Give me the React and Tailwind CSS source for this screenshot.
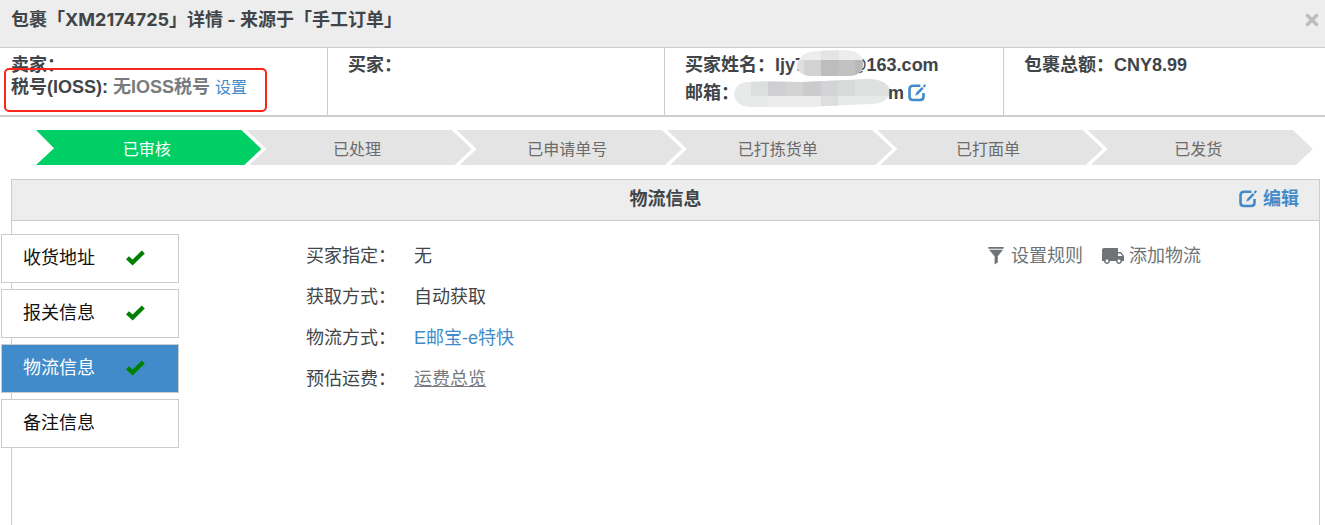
import React, { useState } from "react";
import { MdLocalShipping } from "react-icons/md";

const steps = ["已审核", "已处理", "已申请单号", "已打拣货单", "已打面单", "已发货"];

const tabs = [
  { id: "address", label: "收货地址", done: true },
  { id: "customs", label: "报关信息", done: true },
  { id: "logistics", label: "物流信息", done: true },
  { id: "remark", label: "备注信息", done: false },
];

const EditIcon = () => (
  <svg viewBox="0 0 18 18" className="h-[18px] w-[18px] shrink-0" fill="currentColor" aria-hidden="true">
    <path
      d="M12.4 1.8H5.2Q1.5 1.8 1.5 5.4V12.4Q1.5 16 5.2 16H11.8Q15.5 16 15.5 12.4V9"
      fill="none"
      stroke="currentColor"
      strokeWidth="2.6"
    />
    <path d="M7.2 11.8L8.2 8.8L13.8 3L15.6 4.8L10 10.6Z" />
    <path d="M14.7 2.2L16.2 0.6Q16.8 0.1 17.5 0.7Q18.1 1.4 17.6 2L16.2 3.7Z" />
  </svg>
);

const CheckIcon = () => (
  <svg viewBox="0 0 19 16" className="h-4 w-[19px]" fill="#008000" aria-hidden="true">
    <path d="M0 9.2L3 6.2L6.6 9.6L15.8 0.4L18.8 3.4L6.6 15.6Z" />
  </svg>
);

const FilterIcon = () => (
  <svg viewBox="0 0 16 18" className="h-[18px] w-4" fill="currentColor" aria-hidden="true">
    <path d="M0.4 0H15.6V1.7H0.4ZM1 2.8H15L9.8 9.2V15.6L6.6 17.4V9.2Z" />
  </svg>
);

// mosaic over the private part of the account name
const NameMask = () => (
  <svg viewBox="0 0 66 27" className="absolute -top-px left-[22px] h-[27px] w-[66px]" aria-hidden="true">
    <clipPath id="name-mask">
      <path d="M1 12Q4 2 20 1L48 0Q64 1 66 11V16Q64 25 54 26H12Q1 24 0 16Z" />
    </clipPath>
    <g clipPath="url(#name-mask)">
      <rect width="66" height="27" fill="#ededed" />
      <rect x="24" width="18" height="10" fill="#e4e4e5" />
      <rect y="10" width="7" height="17" fill="#dedede" />
      <rect x="7" y="10" width="17" height="17" fill="#d2d2d3" />
      <rect x="24" y="10" width="17" height="17" fill="#bdbdbe" />
      <rect x="41" y="10" width="17" height="17" fill="#c2c2c3" />
      <rect x="58" y="10" width="8" height="17" fill="#b9b9ba" />
    </g>
  </svg>
);

const EmailMask = () => (
  <svg viewBox="0 0 156 28" className="-ml-[5px] h-7 w-[156px]" aria-hidden="true">
    <clipPath id="email-mask">
      <path d="M12 3Q40 2 68 3L136 0Q154 1 156 12Q155 24 138 25L70 28H14Q1 26 0 15Q1 5 12 3Z" />
    </clipPath>
    <g clipPath="url(#email-mask)">
      <rect width="156" height="28" fill="#e8e9e9" />
      <rect x="17" width="17" height="17" fill="#dddfdf" />
      <rect x="34" width="18" height="17" fill="#cfcfd1" />
      <rect x="52" width="17" height="17" fill="#d3d3d4" />
      <rect x="69" width="18" height="17" fill="#cbcbcd" />
      <rect x="87" width="17" height="17" fill="#d3d4d5" />
      <rect x="104" width="17" height="17" fill="#d9dada" />
      <rect x="121" width="35" height="17" fill="#dfe1e0" />
      <rect x="34" y="17" width="53" height="11" fill="#ececec" />
      <rect x="87" y="17" width="17" height="11" fill="#dddfde" />
    </g>
  </svg>
);

const Row = ({ label, children }) => (
  <div className="flex h-[41px] items-center gap-[18px]">
    <dt className="w-[90px] shrink-0">{label}：</dt>
    <dd>{children}</dd>
  </div>
);

const App = () => {
  const [active, setActive] = useState("logistics");

  return (
    <div className="flex min-h-screen flex-col bg-white font-['Liberation_Sans','Noto_Sans_CJK_SC',sans-serif] text-lg text-[#404549]">
      <header className="flex h-12 items-center justify-between border-b border-[#ccc] bg-[#ededed] pr-[6px] pb-2 pl-[11px]">
        <h1 className="font-['Inter','Noto_Sans_CJK_SC',sans-serif] font-bold">
          包裹「XM2174725」详情 - 来源于「手工订单」
        </h1>
        <button type="button" aria-label="关闭" className="text-[#bdbdbd]">
          <svg viewBox="0 0 14 14" className="h-[14px] w-[14px]" stroke="currentColor" strokeWidth="3.4">
            <path d="M1.5 1.5L12.5 12.5M12.5 1.5L1.5 12.5" />
          </svg>
        </button>
      </header>

      <section className="grid h-[69px] grid-cols-[328fr_337fr_339fr_321fr] border-b-2 border-[#ccc] font-bold">
        <div className="relative border-r border-[#ccc] pt-[6px] pl-[11px] leading-[22px]">
          <p>卖家：</p>
          <p>
            税号(IOSS): <span className="text-[#777b7e]">无IOSS税号</span>{" "}
            <a href="#ioss" className="text-base leading-[22px] font-normal text-[#428bca]">设置</a>
          </p>
          <div className="pointer-events-none absolute top-5 left-1 h-11 w-[263px] rounded-[5px] border-2 border-[#f9251a]" />
        </div>
        <div className="border-r border-[#ccc] pt-[3px] pl-5 leading-7">买家：</div>
        <div className="border-r border-[#ccc] pt-[3px] pl-5 leading-7">
          <p className="flex">
            买家姓名：
            <span className="relative">
              ljy7
              <span className="inline-block w-11" />
              @163.com
              <NameMask />
            </span>
          </p>
          <p className="flex items-center">
            邮箱：
            <EmailMask />
            <span className="-ml-[2px]">m</span>
            <a href="#email" aria-label="编辑邮箱" className="ml-1 text-[#428bca]">
              <EditIcon />
            </a>
          </p>
        </div>
        <div className="pt-[3px] pl-5 leading-7">包裹总额：CNY8.99</div>
      </section>

      <ol className="mt-[13px] mr-3 ml-9 flex text-base text-[#6b6b6b]">
        {steps.map((step, i) => (
          <li
            key={step}
            className={
              i === 0
                ? "h-[35px] flex-1 bg-[#00cf65] pt-1 pr-1 text-center leading-8 text-white [clip-path:polygon(0_0,calc(100%-20px)_0,100%_54%,calc(100%-17px)_100%,0_100%,18px_52%)]"
                : "-ml-[15px] h-[35px] flex-1 bg-[#e4e4e4] pt-1 pr-1 text-center leading-8 [clip-path:polygon(0_0,calc(100%-20px)_0,100%_54%,calc(100%-17px)_100%,3px_100%,20px_54%)]"
            }
          >
            {step}
          </li>
        ))}
      </ol>

      <main className="mt-[14px] mr-[5px] ml-[11px] flex grow flex-col border border-b-0 border-[#ccc]">
        <div className="grid h-[41px] grid-cols-[1fr_auto_1fr] items-center border-b border-[#ccc] bg-[#ededed] pb-[2px] font-bold">
          <h2 className="col-start-2">物流信息</h2>
          <a href="#edit" className="flex items-center gap-[6px] justify-self-end pr-5 text-[#428bca]">
            <EditIcon />
            编辑
          </a>
        </div>

        <div className="flex items-start pt-[13px]">
          <nav className="-ml-[11px] flex w-[178px] shrink-0 flex-col gap-[6px]">
            {tabs.map((tab) => (
              <button
                key={tab.id}
                type="button"
                onClick={() => setActive(tab.id)}
                className={`flex h-[49px] items-center gap-[31px] border border-[#ccc] pb-[2px] pl-[21px] ${
                  active === tab.id ? "bg-[#428bca] text-white" : "bg-white text-[#111]"
                }`}
              >
                {tab.label}
                {tab.done && <CheckIcon />}
              </button>
            ))}
          </nav>

          <dl className="mt-px ml-[127px] grow">
            <Row label="买家指定">无</Row>
            <Row label="获取方式">自动获取</Row>
            <Row label="物流方式">
              <a href="#method" className="text-[#428bca]">E邮宝-e特快</a>
            </Row>
            <Row label="预估运费">
              <a href="#freight" className="text-[#777b7e] underline">运费总览</a>
            </Row>
          </dl>

          <div className="mt-px mr-[118px] flex h-[41px] items-center gap-[18px] text-[#6f7376]">
            <button type="button" className="flex items-center gap-[7px]">
              <FilterIcon />
              设置规则
            </button>
            <button type="button" className="flex items-center gap-1">
              <MdLocalShipping className="h-6 w-6" />
              添加物流
            </button>
          </div>
        </div>
      </main>
    </div>
  );
};

export default App;
